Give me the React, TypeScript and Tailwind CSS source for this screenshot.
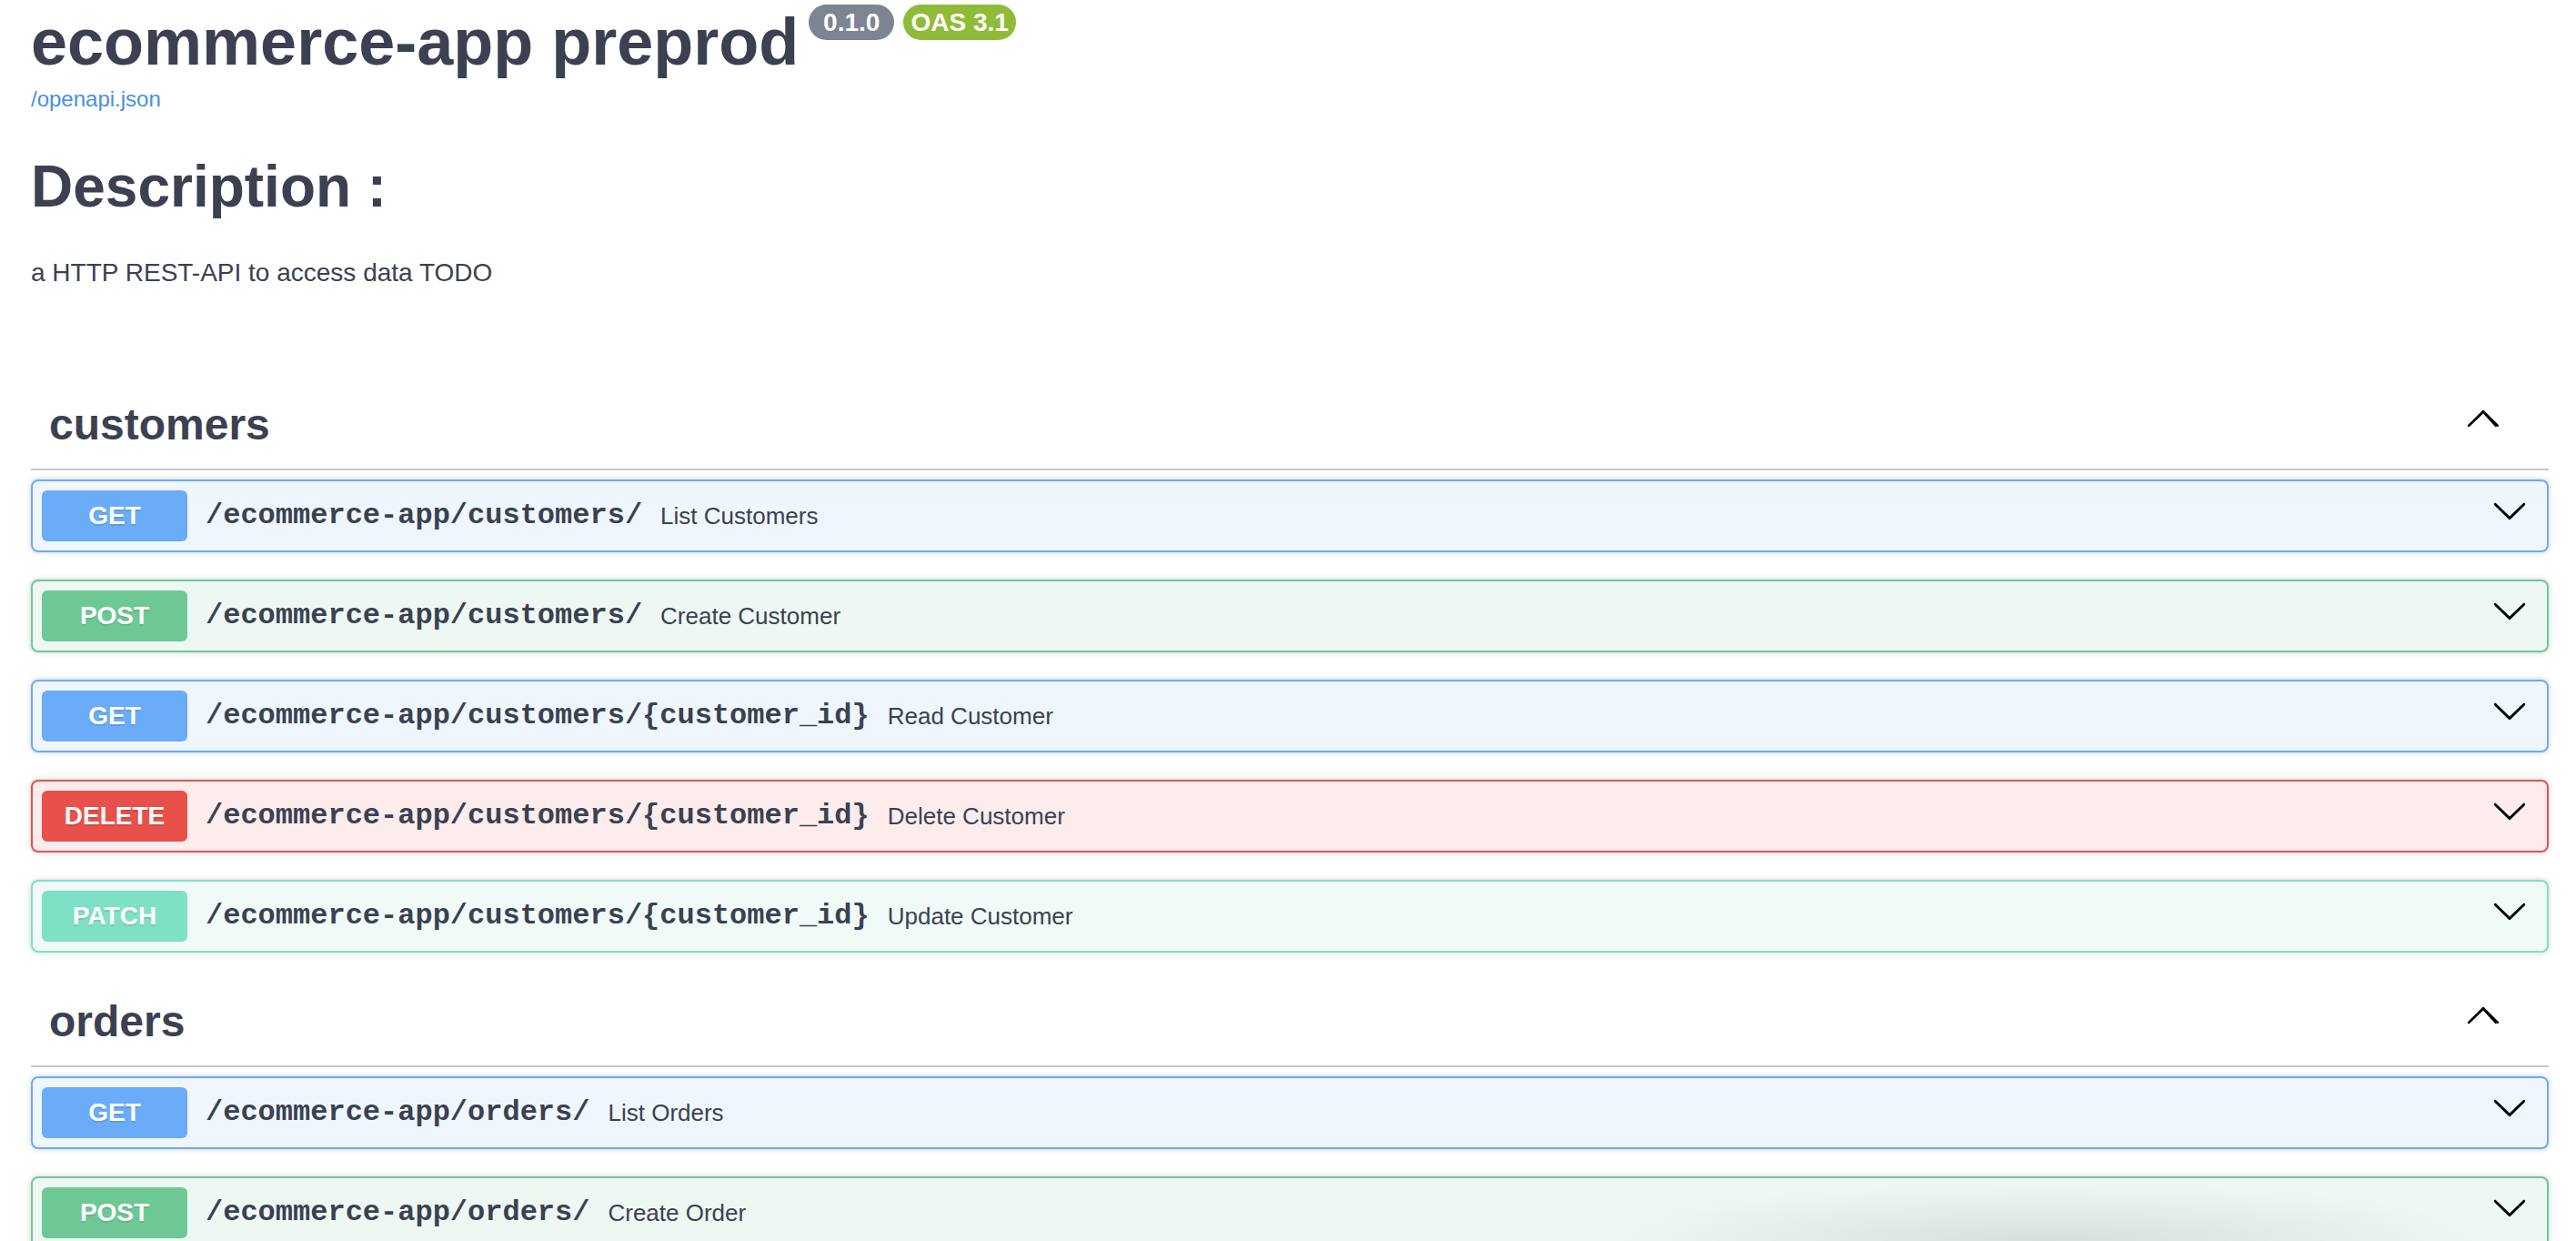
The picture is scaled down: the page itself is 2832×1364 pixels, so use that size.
import React from "react";

type Method = "GET" | "POST" | "DELETE" | "PATCH";

const methodStyles: Record<Method, { badge: string; row: string }> = {
  GET: { badge: "bg-[#6aacf8]", row: "border-[#6aacf8] bg-[#eff6fe]" },
  POST: { badge: "bg-[#6ec895]", row: "border-[#6ec895] bg-[#eef8f2]" },
  DELETE: { badge: "bg-[#e8514b]", row: "border-[#e8514b] bg-[#fcecec]" },
  PATCH: { badge: "bg-[#7ee0c4]", row: "border-[#7ee0c4] bg-[#f0fbf8]" },
};

const sections: { tag: string; ops: { method: Method; path: string; summary: string }[] }[] = [
  {
    tag: "customers",
    ops: [
      { method: "GET", path: "/ecommerce-app/customers/", summary: "List Customers" },
      { method: "POST", path: "/ecommerce-app/customers/", summary: "Create Customer" },
      { method: "GET", path: "/ecommerce-app/customers/{customer_id}", summary: "Read Customer" },
      { method: "DELETE", path: "/ecommerce-app/customers/{customer_id}", summary: "Delete Customer" },
      { method: "PATCH", path: "/ecommerce-app/customers/{customer_id}", summary: "Update Customer" },
    ],
  },
  {
    tag: "orders",
    ops: [
      { method: "GET", path: "/ecommerce-app/orders/", summary: "List Orders" },
      { method: "POST", path: "/ecommerce-app/orders/", summary: "Create Order" },
      { method: "GET", path: "/ecommerce-app/orders/{order_id}", summary: "Read Order" },
    ],
  },
];

function ArrowDown({ className }: { className?: string }) {
  return (
    <svg viewBox="0 0 20 20" className={className} fill="currentColor">
      <path d="M17.418 6.109c.272-.268.709-.268.979 0s.271.701 0 .969l-7.908 7.83c-.27.268-.707.268-.979 0l-7.908-7.83c-.27-.268-.27-.701 0-.969.271-.268.709-.268.979 0L10 13.25l7.418-7.141z" />
    </svg>
  );
}

function ArrowUp({ className }: { className?: string }) {
  return (
    <svg viewBox="0 0 20 20" className={className} fill="currentColor">
      <path d="M17.418 14.908c-.272.268-.709.268-.979 0L10 7.767 2.582 14.908c-.27.268-.707.268-.979 0-.27-.268-.27-.701 0-.969l7.908-7.83c.27-.268.707-.268.979 0l7.908 7.83c.27.268.27.701 0 .969z" />
    </svg>
  );
}

function Operation({ method, path, summary }: { method: Method; path: string; summary: string }) {
  const s = methodStyles[method];
  return (
    <div
      className={`mb-[30px] flex h-[80px] items-center rounded-[8px] border-2 p-[10px] shadow-[0_0_6px_rgba(0,0,0,0.19)] ${s.row}`}
    >
      <div
        className={`flex h-[56px] w-[160px] shrink-0 items-center justify-center rounded-[6px] text-[28px] font-bold text-white [text-shadow:0_2px_0_rgba(0,0,0,0.1)] ${s.badge}`}
      >
        {method}
      </div>
      <span className="px-[20px] font-['Liberation_Mono',monospace] text-[32px] font-bold text-[#3b4151]">
        {path}
      </span>
      <span className="flex-1 text-[26px] text-[#3b4151]">{summary}</span>
      <ArrowDown className="mb-[12px] mr-[11px] h-[40px] w-[40px] shrink-0 text-black" />
    </div>
  );
}

export default function App() {
  return (
    <div className="relative h-screen overflow-hidden bg-white pl-[34px] pr-[30px] font-['Liberation_Sans',Arial,sans-serif] text-[#3b4151]">
      {/* Info */}
      <div className="flex items-start">
        <h2 className="mt-[6px] text-[72px] font-bold leading-[80px]">ecommerce-app preprod</h2>
        <span className="ml-[11px] mt-[5px] flex h-[39px] w-[94px] items-center justify-center rounded-full bg-[#7d8492] text-[28px] font-bold text-white">
          0.1.0
        </span>
        <span className="ml-[10px] mt-[5px] flex h-[39px] w-[124px] items-center justify-center rounded-full bg-[#8fbc38] text-[28px] font-bold text-white">
          OAS 3.1
        </span>
      </div>
      <a className="mt-[9px] block text-[24px] leading-[28px] text-[#4990e2]">/openapi.json</a>
      <h1 className="mt-[45px] text-[64px] font-bold leading-[74px]">Description :</h1>
      <p className="mt-[38px] text-[28px] leading-[40px]">a HTTP REST-API to access data TODO</p>

      {/* Tags */}
      <div className="mt-[101px]">
        {sections.map((sec, i) => (
          <div key={sec.tag} className={i > 0 ? "mt-[13px]" : ""}>
            <div className="flex items-center border-b-2 border-[#c4c6cb] pb-[20px] pl-[20px] pr-[52px] pt-[17px]">
              <h3 className="flex-1 text-[48px] font-bold leading-[57px]">{sec.tag}</h3>
              <ArrowUp className="mb-[16px] h-[40px] w-[40px] text-black" />
            </div>
            <div className="mt-[10px]">
              {sec.ops.map((op, j) => (
                <Operation key={j} {...op} />
              ))}
            </div>
          </div>
        ))}
      </div>

      {/* soft shadow of something below the fold */}
      <div className="pointer-events-none absolute left-[1750px] top-[1300px] h-[130px] w-[1000px] bg-[radial-gradient(closest-side,rgba(0,0,0,0.10),rgba(0,0,0,0))]" />
    </div>
  );
}
